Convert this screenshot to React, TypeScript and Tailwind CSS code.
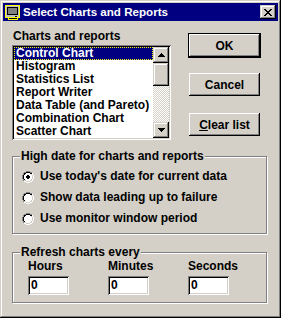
import React from "react";

const FONT = "font-['Liberation_Sans',Arial,sans-serif]";

const COLORS: Record<string, string> = {
  G: "#808080",
  D: "#000000",
  L: "#d4d0c8",
  H: "#ffffff",
  W: "#ffffff",
  K: "#000000",
  Y: "#ffff00",
  S: "#c0c0c0",
};

function PixelMap({ rows, className }: { rows: string[]; className?: string }) {
  const w = rows[0].length;
  const h = rows.length;
  const rects: React.ReactNode[] = [];
  rows.forEach((r, y) => {
    for (let x = 0; x < r.length; x++) {
      const c = r[x];
      if (c !== ".") rects.push(<rect key={`${x}-${y}`} x={x} y={y} width={1} height={1} fill={COLORS[c]} />);
    }
  });
  return (
    <svg width={w} height={h} viewBox={`0 0 ${w} ${h}`} shapeRendering="crispEdges" className={className}>
      {rects}
    </svg>
  );
}

const RADIO = [
  "....GGGG....",
  "..GGDDDDGG..",
  ".GDDWWWWDDH.",
  ".GDWWWWWWLH.",
  "GDWWWWWWWWLH",
  "GDWWWWWWWWLH",
  "GDWWWWWWWWLH",
  "GDWWWWWWWWLH",
  ".GDWWWWWWLH.",
  ".GLLWWWWLLH.",
  "..HHLLLLHH..",
  "....HHHH....",
];

const RADIO_ON = RADIO.map((r, y) => {
  const a = r.split("");
  if (y === 4 || y === 7) { a[5] = "K"; a[6] = "K"; }
  if (y === 5 || y === 6) { a[4] = "K"; a[5] = "K"; a[6] = "K"; a[7] = "K"; }
  return a.join("");
});

const CLOSE_X = [
  "KK....KK",
  ".KK..KK.",
  "..KKKK..",
  "...KK...",
  "..KKKK..",
  ".KK..KK.",
  "KK....KK",
];

const UP = ["...K...", "..KKK..", ".KKKKK.", "KKKKKKK"];
const DOWN = ["KKKKKKK", ".KKKKK.", "..KKK..", "...K..."];

const ICON = [
  "YYYYYYYYYYYYYYY.",
  "YSSSSSSSSSSSSSY.",
  "YSKKKKKKKKKKKSY.",
  "YSKGGGGGGGGGKSY.",
  "YSKGGGGGGGGGKSY.",
  "YSKGGGGGGGGGKSY.",
  "YSKGGGGGGGGGKSY.",
  "YSKGGGGGGGGGKSY.",
  "YSKGGGGGGGGGKSY.",
  "YSKKKKKKKKKKKSY.",
  "YSSSSSSSSSSSSSY.",
  "YSSSSSSSSSKKSSY.",
  "YYYYYYYYYYYYYYY.",
  "...YKKKKKKKKY...",
  "...YYYYYYYYYY...",
  "................",
];

const RAISED = "shadow-[inset_-1px_-1px_#000,inset_1px_1px_#fff,inset_-2px_-2px_#808080,inset_2px_2px_#d4d0c8]";
const RAISED_SB = "shadow-[inset_-1px_-1px_#000,inset_1px_1px_#d4d0c8,inset_-2px_-2px_#808080,inset_2px_2px_#fff]";
const SUNKEN = "shadow-[inset_1px_1px_#808080,inset_-1px_-1px_#fff,inset_2px_2px_#000,inset_-2px_-2px_#d4d0c8]";

const ITEMS = [
  "Control Chart",
  "Histogram",
  "Statistics List",
  "Report Writer",
  "Data Table (and Pareto)",
  "Combination Chart",
  "Scatter Chart",
];

const RADIOS = [
  "Use today's date for current data",
  "Show data leading up to failure",
  "Use monitor window period",
];

export default function App() {
  return (
    <div
      className={`${FONT} font-bold text-[12px] text-black w-[281px] h-[318px] bg-[#d4d0c8] p-[3px] shadow-[inset_-1px_-1px_#000,inset_1px_1px_#d4d0c8,inset_-2px_-2px_#808080,inset_2px_2px_#fff]`}
    >
      {/* Title bar */}
      <div className="h-[18px] bg-[#000080] flex items-center pl-[2px] pr-[2px]">
        <PixelMap rows={ICON} className="mt-[2px]" />
        <span className="ml-[2px] text-white text-[11.6px] leading-[18px]">Select Charts and Reports</span>
        <div className={`ml-auto w-[16px] h-[14px] bg-[#d4d0c8] ${RAISED_SB} flex items-center justify-center`}>
          <PixelMap rows={CLOSE_X} />
        </div>
      </div>

      <div className="px-[9px]">
        <div className="flex mt-[9px]">
          <div className="w-[159px]">
            <div className="h-[13px] leading-[13px] pl-[1px]">Charts and reports</div>
            <div className={`mt-[2px] h-[95px] bg-white p-[2px] flex ${SUNKEN}`}>
              <div className="flex-1 flex flex-col">
                {ITEMS.map((it, i) => (
                  <div
                    key={it}
                    className={
                      i === 0
                        ? "h-[13px] leading-[11px] pl-[1px] bg-[#000080] text-white border border-dotted border-[#ffff00] whitespace-nowrap"
                        : "h-[13px] leading-[13px] pl-[2px] whitespace-nowrap"
                    }
                  >
                    {it}
                  </div>
                ))}
              </div>
              <div className="w-[16px] flex flex-col">
                <div className={`h-[16px] bg-[#d4d0c8] ${RAISED_SB} flex items-center justify-center`}>
                  <PixelMap rows={UP} />
                </div>
                <div className={`h-[23px] bg-[#d4d0c8] ${RAISED_SB}`} />
                <div className="h-[36px] bg-[repeating-conic-gradient(#ffffff_0_25%,#d4d0c8_0_50%)] bg-[length:2px_2px]" />
                <div className={`h-[16px] bg-[#d4d0c8] ${RAISED_SB} flex items-center justify-center`}>
                  <PixelMap rows={DOWN} />
                </div>
              </div>
            </div>
          </div>

          <div className="ml-[17px] pt-[3px] flex flex-col">
            <div className="w-[73px] h-[25px] border border-black">
              <div className={`w-[71px] h-[23px] ${RAISED} flex items-center justify-center`}>OK</div>
            </div>
            <div className={`mt-[15px] ml-[1px] w-[71px] h-[23px] ${RAISED} flex items-center justify-center`}>Cancel</div>
            <div className={`mt-[17px] ml-[1px] w-[71px] h-[23px] ${RAISED} flex items-center justify-center`}>
              <span><span className="underline">C</span>lear list</span>
            </div>
          </div>
        </div>

        {/* Group 1 */}
        <div className="relative mt-[16px] w-[255px] h-[78px] border border-[#808080] shadow-[inset_1px_1px_#fff,1px_1px_#fff] pt-[9px] pl-[9px]">
          <div className="absolute top-[-7px] left-[7px] bg-[#d4d0c8] px-[1px] h-[13px] leading-[13px] whitespace-nowrap">
            High date for charts and reports
          </div>
          {RADIOS.map((r, i) => (
            <div key={r} className="h-[21px] flex items-center">
              <PixelMap rows={i === 0 ? RADIO_ON : RADIO} />
              <span className="ml-[6px] leading-[13px] whitespace-nowrap">{r}</span>
            </div>
          ))}
        </div>

        {/* Group 2 */}
        <div className="relative mt-[18px] w-[255px] h-[51px] border border-[#808080] shadow-[inset_1px_1px_#fff,1px_1px_#fff] pt-[7px] pl-[15px]">
          <div className="absolute top-[-7px] left-[7px] bg-[#d4d0c8] px-[1px] h-[13px] leading-[13px] whitespace-nowrap">
            Refresh charts every
          </div>
          <div className="grid grid-cols-[80px_80px_80px]">
            {["Hours", "Minutes", "Seconds"].map((l) => (
              <div key={l}>
                <div className="h-[13px] leading-[13px]">{l}</div>
                <div className={`mt-[3px] w-[41px] h-[19px] bg-white ${SUNKEN} pl-[3px] leading-[19px]`}>0</div>
              </div>
            ))}
          </div>
        </div>
      </div>
    </div>
  );
}
